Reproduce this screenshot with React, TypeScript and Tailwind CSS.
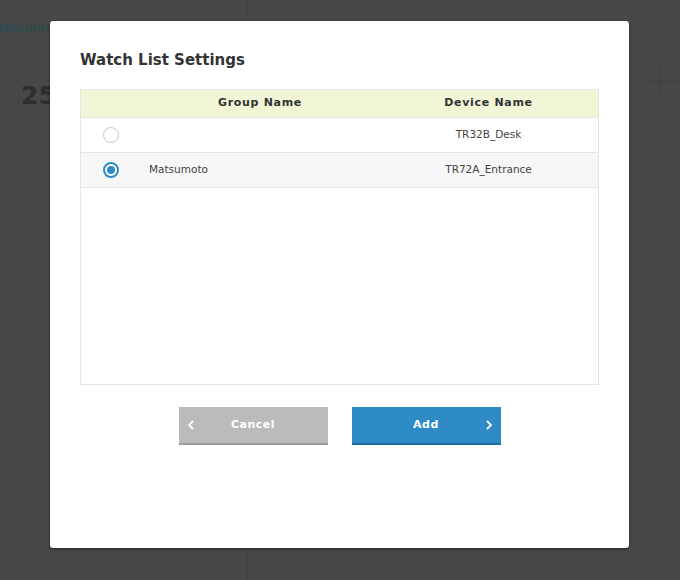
import React, { useState } from 'react';

const rows = [
  { id: 1, group: '', device: 'TR32B_Desk' },
  { id: 2, group: 'Matsumoto', device: 'TR72A_Entrance' },
];

function Radio({ checked }: { checked: boolean }) {
  return checked ? (
    <span className="flex h-4 w-4 items-center justify-center rounded-full border-2 border-[#2e8bc6] bg-white">
      <span className="h-[8px] w-[8px] rounded-full bg-[#2e8bc6]" />
    </span>
  ) : (
    <span className="block h-4 w-4 rounded-full border border-[#c8c8c8] bg-white" />
  );
}

function Chevron({ dir }: { dir: 'left' | 'right' }) {
  return (
    <svg width="6" height="10" viewBox="0 0 6 10" fill="none" stroke="white" strokeWidth="1.8">
      {dir === 'left' ? <path d="M5 1 1 5l4 4" /> : <path d="M1 1l4 4-4 4" />}
    </svg>
  );
}

export default function App() {
  const [selected, setSelected] = useState(2);

  return (
    <div className="relative h-[580px] w-[680px] overflow-hidden bg-[#474747] font-['DejaVu_Sans',Verdana,sans-serif]">
      {/* dimmed page behind */}
      <div className="pointer-events-none absolute inset-0">
        <div className="absolute left-[-9px] top-[19px] text-[12px] font-bold text-[#2f4a4d]">Matsumoto</div>
        <div className="absolute left-[21px] top-[77px] text-[25px] font-bold text-[#2e2e2e]">25.</div>
        <div className="absolute left-0 top-[150px] h-px w-full bg-[#424242]" />
        <div className="absolute left-[237px] top-0 h-full w-px bg-[#424242]" />
        <div className="absolute left-[247px] top-0 h-full w-px bg-[#424242]" />
        <div className="absolute left-[650px] top-[81px] h-px w-[28px] bg-[#3f3f3f]" />
        <div className="absolute left-[660px] top-[66px] h-[30px] w-px bg-[#3f3f3f]" />
      </div>

      <div className="absolute left-[50px] top-[21px] flex h-[527px] w-[579px] flex-col rounded-[3px] bg-white px-[30px] shadow-[0_1px_3px_rgba(0,0,0,0.5)]">
        <h2 className="mt-[29px] text-[15px] font-bold leading-5 text-[#333]">Watch List Settings</h2>

        <div className="mt-[19px] h-[296px] w-[519px] border border-[#e6e6e6]">
          <div className="flex h-[28px] items-center border-b border-[#e6e6e6] bg-[#f2f6d6] text-[11px] font-bold tracking-[0.7px] text-[#333]">
            <div className="w-[60px]" />
            <div className="w-[238px] text-center">Group Name</div>
            <div className="flex-1 text-center">Device Name</div>
          </div>
          {rows.map((r, i) => (
            <div
              key={r.id}
              onClick={() => setSelected(r.id)}
              className={`flex h-[35px] cursor-pointer items-center border-b border-[#e6e6e6] text-[10.5px] text-[#444] ${i % 2 === 1 ? 'bg-[#f7f7f7]' : 'bg-white'}`}
            >
              <div className="flex w-[60px] justify-center">
                <Radio checked={selected === r.id} />
              </div>
              <div className="w-[238px] pl-[8px]">{r.group}</div>
              <div className="flex-1 text-center">{r.device}</div>
            </div>
          ))}
        </div>

        <div className="mt-[22px] flex justify-center gap-[24px]">
          <button className="relative flex h-[38px] w-[149px] items-center justify-center border-b-2 border-[#9a9a9a] bg-[#bbbbbb] text-[11px] font-bold tracking-[0.5px] text-white">
            <span className="absolute left-[9px] flex items-center"><Chevron dir="left" /></span>
            Cancel
          </button>
          <button className="relative flex h-[38px] w-[149px] items-center justify-center border-b-2 border-[#1f6c9f] bg-[#2e8bc6] text-[11px] font-bold tracking-[0.5px] text-white">
            Add
            <span className="absolute right-[9px] flex items-center"><Chevron dir="right" /></span>
          </button>
        </div>
      </div>
    </div>
  );
}
